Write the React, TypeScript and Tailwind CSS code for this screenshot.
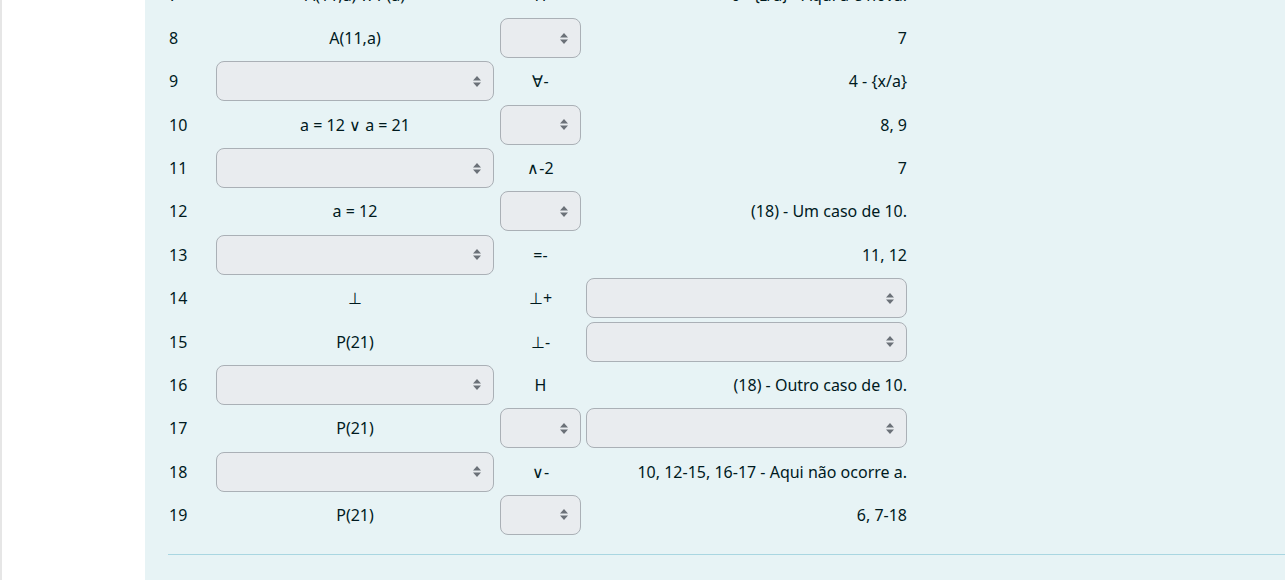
import React from 'react';

type Cell = string | { sel: true };
type Row = { n: number; formula: Cell; rule: Cell; just: Cell };

const S: Cell = { sel: true };

const rows: Row[] = [
  { n: 7, formula: 'A(11,a) ∧ P(a)', rule: 'H', just: '6 - {z/a} - Aqui a é nova.' },
  { n: 8, formula: 'A(11,a)', rule: S, just: '7' },
  { n: 9, formula: S, rule: '∀-', just: '4 - {x/a}' },
  { n: 10, formula: 'a = 12 ∨ a = 21', rule: S, just: '8, 9' },
  { n: 11, formula: S, rule: '∧-2', just: '7' },
  { n: 12, formula: 'a = 12', rule: S, just: '(18) - Um caso de 10.' },
  { n: 13, formula: S, rule: '=-', just: '11, 12' },
  { n: 14, formula: '⊥', rule: '⊥+', just: S },
  { n: 15, formula: 'P(21)', rule: '⊥-', just: S },
  { n: 16, formula: S, rule: 'H', just: '(18) - Outro caso de 10.' },
  { n: 17, formula: 'P(21)', rule: S, just: S },
  { n: 18, formula: S, rule: '∨-', just: '10, 12-15, 16-17 - Aqui não ocorre a.' },
  { n: 19, formula: 'P(21)', rule: S, just: '6, 7-18' },
];

const Select = () => (
  <div className="w-full h-[40px] rounded-lg border border-[#aab0b6] bg-[#e9ecef] flex items-center justify-end pr-[12px]">
    <svg width="8" height="11" viewBox="0 0 8 11" className="shrink-0">
      <path d="M4 0 L8 4.5 H0 Z M4 11 L0 6.5 H8 Z" fill="#6b7178" />
    </svg>
  </div>
);

const isSel = (c: Cell) => typeof c !== 'string';

export default function App() {
  return (
    <div className="h-[580px] overflow-hidden flex bg-white text-[#001a1e] text-[16px]" style={{ fontFamily: '"Segoe UI", "Noto Sans", sans-serif' }}>
      {/* blank sidebar */}
      <div className="w-[145px] shrink-0 border-l-2 border-[#e6e6e6] bg-white" />

      <div className="flex-1 bg-[#e7f3f5] pl-[23px]">
        <div className="-mt-[27px] flex flex-col">
          {rows.map((r) => (
            <div key={r.n} className="flex items-center h-[43.36px]">
              <div className="w-[45px] pl-[1px]">{r.n}</div>
              <div className="w-[284px] px-[3px] flex justify-center">
                {isSel(r.formula) ? <Select /> : <span>{r.formula as string}</span>}
              </div>
              <div className="w-[87px] px-[3px] flex justify-center">
                {isSel(r.rule) ? <Select /> : <span>{r.rule as string}</span>}
              </div>
              <div className="w-[325px] pl-[2px] pr-[2px] flex justify-end">
                {isSel(r.just) ? <Select /> : <span>{r.just as string}</span>}
              </div>
            </div>
          ))}
        </div>
        <div className="mt-[17px] border-t border-[#a9d6e1]" />
      </div>
    </div>
  );
}
